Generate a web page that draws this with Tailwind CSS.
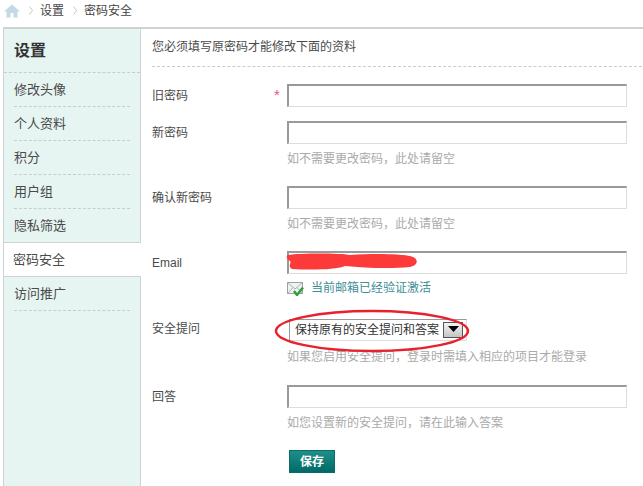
<!DOCTYPE html>
<html lang="zh-CN">
<head>
    <meta charset="UTF-8">
    <script src="https://cdn.jsdelivr.net/npm/@tailwindcss/browser@4"></script>
    <title>密码安全</title>
</head>
<body class="bg-white w-[643px] h-[486px] overflow-hidden relative font-['Liberation_Sans','Noto_Sans_CJK_SC',sans-serif] text-[12px] text-[#4a4a4a]">
    <!-- Breadcrumb -->
    <div class="h-[27px] flex items-center pl-[4px] pb-[6px] text-[12px] text-[#444]">
        <svg width="16" height="14" viewBox="0 0 16 14"><path d="M8 0.5 L0 7.5 H2.5 V13.5 H6.5 V9 H9.5 V13.5 H13.5 V7.5 H16 Z" fill="#c3d9e6"/></svg>
        <svg class="ml-[9px]" width="4" height="9" viewBox="0 0 4 9"><path d="M0.5 0.5 L3.5 4.5 L0.5 8.5" fill="none" stroke="#c4c4c4"/></svg>
        <span class="ml-[7px]">设置</span>
        <svg class="ml-[9px]" width="4" height="9" viewBox="0 0 4 9"><path d="M0.5 0.5 L3.5 4.5 L0.5 8.5" fill="none" stroke="#c4c4c4"/></svg>
        <span class="ml-[7px]">密码安全</span>
    </div>

    <div class="flex ml-[3px] border-t-2 border-l border-[#cdd2d2] h-[459px]">
        <!-- Sidebar -->
        <div class="w-[137px] shrink-0 bg-[#e6f5f2] border-r border-[#cdd6d4] text-[13px]">
            <div class="h-[44px] pl-[10px] pt-[11px] text-[16px] font-bold leading-[22px] text-[#333] border-b border-dashed border-[#c8cccb]">设置</div>
            <a class="block mx-[10px] h-[34px] leading-[34px] border-b border-dashed border-[#c8cccb]">修改头像</a>
            <a class="block mx-[10px] h-[34px] leading-[34px] border-b border-dashed border-[#c8cccb]">个人资料</a>
            <a class="block mx-[10px] h-[34px] leading-[34px] border-b border-dashed border-[#c8cccb]">积分</a>
            <a class="block mx-[10px] h-[34px] leading-[34px] border-b border-dashed border-[#c8cccb]">用户组</a>
            <a class="block mx-[10px] h-[33px] leading-[34px]">隐私筛选</a>
            <a class="block h-[35px] leading-[33px] pl-[9px] bg-white -mr-[1px] relative border-y border-[#cdd2d2]">密码安全</a>
            <a class="block mx-[10px] h-[34px] leading-[34px] border-b border-dashed border-[#c8cccb]">访问推广</a>
        </div>

        <!-- Form -->
        <div class="flex-1 pl-[11px]">
            <div class="h-[38px] mr-[1px] leading-[37px] border-b border-dashed border-[#c8cccb]">您必须填写原密码才能修改下面的资料</div>

            <div class="flex mt-[17px] h-[23px]">
                <label class="w-[122px] leading-[24px]">旧密码</label>
                <span class="w-[13px] text-[15px] text-[#f0508a] leading-[22px]">*</span>
                <input class="w-[340px] h-[23px] border border-[#999] border-r-[#ddd] border-b-[#ddd] border-t-2 border-l-2">
            </div>

            <div class="flex mt-[14px]">
                <label class="w-[135px] leading-[24px]">新密码</label>
                <div>
                    <input class="block w-[340px] h-[23px] border border-[#999] border-r-[#ddd] border-b-[#ddd] border-t-2 border-l-2">
                    <p class="mt-[6px] leading-[18px] text-[#aaa]">如不需要更改密码，此处请留空</p>
                </div>
            </div>

            <div class="flex mt-[18px]">
                <label class="w-[135px] leading-[24px]">确认新密码</label>
                <div>
                    <input class="block w-[340px] h-[23px] border border-[#999] border-r-[#ddd] border-b-[#ddd] border-t-2 border-l-2">
                    <p class="mt-[6px] leading-[18px] text-[#aaa]">如不需要更改密码，此处请留空</p>
                </div>
            </div>

            <div class="flex mt-[18px]">
                <label class="w-[135px] leading-[24px]">Email</label>
                <div>
                    <input class="block w-[340px] h-[23px] border border-[#999] border-r-[#ddd] border-b-[#ddd] border-t-2 border-l-2">
                    <p class="mt-[5px] leading-[18px] flex items-center text-[#3f8f95]">
                        <svg class="mr-[7px]" width="17" height="15" viewBox="0 0 17 15">
                            <rect x="0.5" y="1.5" width="15" height="11" fill="#eef2f0" stroke="#9aa5a2"/>
                            <path d="M0.5 1.5 L8 8 L15.5 1.5 M0.5 12.5 L6 6.5 M15.5 12.5 L10 6.5" fill="none" stroke="#a9b3b0"/>
                            <path d="M7 10 L10 14 L16 6.5" fill="none" stroke="#2f9e3a" stroke-width="2.4"/>
                        </svg>
                        当前邮箱已经验证激活
                    </p>
                </div>
            </div>

            <div class="flex mt-[22px]">
                <label class="w-[135px] leading-[20px]">安全提问</label>
                <div>
                    <div class="ml-[2px] w-[178px] h-[22px] border border-[#999] border-r-[#ddd] border-b-[#ddd] flex items-center justify-between pl-[5px] pr-[3px] text-[#333]">
                        <span>保持原有的安全提问和答案</span>
                        <span class="w-[20px] h-[16px] border border-[#555] bg-gradient-to-b from-[#f4f4f4] to-[#c4c4c4] flex justify-center pt-[3px]">
                            <svg width="11" height="6" viewBox="0 0 11 6"><path d="M0 0 H11 L5.5 6 Z" fill="#000"/></svg>
                        </span>
                    </div>
                    <p class="mt-[7px] leading-[18px] text-[#aaa]">如果您启用安全提问，登录时需填入相应的项目才能登录</p>
                </div>
            </div>

            <div class="flex mt-[19px]">
                <label class="w-[135px] leading-[24px]">回答</label>
                <div>
                    <input class="block w-[340px] h-[23px] border border-[#999] border-r-[#ddd] border-b-[#ddd] border-t-2 border-l-2">
                    <p class="mt-[6px] leading-[18px] text-[#aaa]">如您设置新的安全提问，请在此输入答案</p>
                </div>
            </div>

            <button class="block ml-[137px] mt-[18px] w-[46px] h-[23px] bg-gradient-to-b from-[#1d8f8a] to-[#006a66] border border-[#0d6b68] text-white font-bold text-[12px]">保存</button>
        </div>
    </div>

    <!-- Red marker annotations drawn over the screenshot -->
    <svg class="absolute left-0 top-0 pointer-events-none" width="643" height="486" viewBox="0 0 643 486">
        <path d="M288 255 C300 253 340 253 350 255 C375 253 400 254 410 256 C419 258 419 265 410 267 C390 269 365 268 345 266 C335 270 310 270 292 269 C287 266 292 263 290 261 C286 259 286 256 288 255 Z" fill="#fd3a3a"/>
        <ellipse cx="372" cy="331" rx="96" ry="20" fill="none" stroke="#e8212c" stroke-width="2.5"/>
    </svg>
</body>
</html>
